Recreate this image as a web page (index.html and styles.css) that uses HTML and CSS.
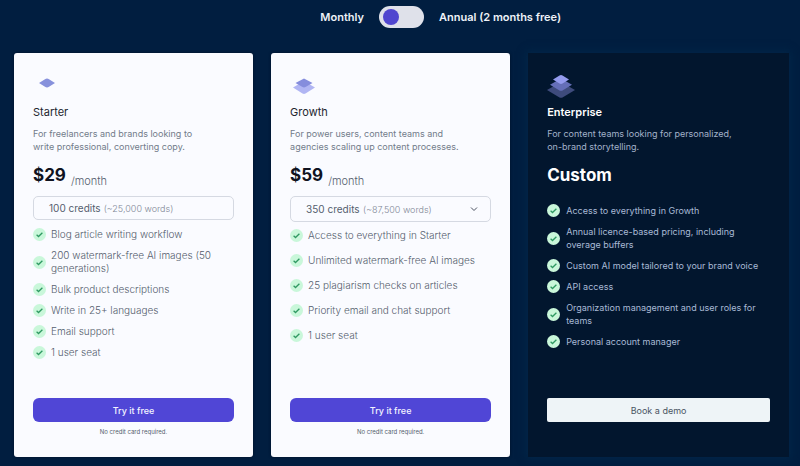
FILE: index.html
```html
<!DOCTYPE html>
<html lang="en">
<head>
<meta charset="UTF-8">
<meta name="viewport" content="width=device-width, initial-scale=1">
<title>Pricing</title>
<link rel="stylesheet" href="styles.css">
</head>
<body>
	<!-- shared tick icon -->
	<svg class="defs" width="0" height="0" aria-hidden="true">
		<symbol id="tick" viewBox="0 0 13 13">
			<circle class="tick-bg" cx="6.5" cy="6.5" r="6.5"/>
			<path class="tick-mark" d="M3.6 6.8 L5.5 8.5 L9.4 4.7"/>
		</symbol>
	</svg>

	<header class="billing">
		<label class="billing-left" for="period">Monthly</label>
		<input class="switch" type="checkbox" id="period">
		<label for="period">Annual (2 months free)</label>
	</header>

	<main class="plans">
		<section class="card">
			<svg class="logo" viewBox="0 0 28 28" aria-hidden="true">
				<path fill="#8791dc" d="M14 5.5 Q15 5.5 16 6.2 L22 10 L16 13.8 Q14 15 12 13.8 L6 10 L12 6.2 Q13 5.5 14 5.5z"/>
			</svg>
			<h2>Starter</h2>
			<p class="desc">For freelancers and brands looking to write professional, converting copy.</p>
			<p class="price"><strong>$29</strong> <span>/month</span></p>
			<div class="credits">100 credits <small>(~25,000 words)</small></div>
			<ul>
				<li><svg><use href="#tick"/></svg>Blog article writing workflow</li>
				<li><svg><use href="#tick"/></svg>200 watermark-free AI images (50 generations)</li>
				<li><svg><use href="#tick"/></svg>Bulk product descriptions</li>
				<li><svg><use href="#tick"/></svg>Write in 25+ languages</li>
				<li><svg><use href="#tick"/></svg>Email support</li>
				<li><svg><use href="#tick"/></svg>1 user seat</li>
			</ul>
			<footer>
				<button type="button">Try it free</button>
				<p class="note">No credit card required.</p>
			</footer>
		</section>

		<section class="card growth">
			<svg class="logo" viewBox="0 0 28 28" aria-hidden="true">
				<path fill="#b0b5f3" d="M14 8 L25 14.5 L15.5 20.6 Q14 21.5 12.5 20.6 L3 14.5z"/>
				<path fill="#858ddd" d="M14 5.5 L22.5 10 L15.5 14 Q14 14.8 12.5 14 L5.5 10z"/>
			</svg>
			<h2>Growth</h2>
			<p class="desc">For power users, content teams and agencies scaling up content processes.</p>
			<p class="price"><strong>$59</strong> <span>/month</span></p>
			<div class="credits">
				<select id="credits" aria-label="Credits">
					<option>350 credits</option>
				</select>
				<label for="credits"><small>(~87,500 words)</small></label>
				<svg class="arrow" viewBox="0 0 8 6" aria-hidden="true"><path d="M1 1.5 L4 4.5 L7 1.5"/></svg>
			</div>
			<ul>
				<li><svg><use href="#tick"/></svg>Access to everything in Starter</li>
				<li><svg><use href="#tick"/></svg>Unlimited watermark-free AI images</li>
				<li><svg><use href="#tick"/></svg>25 plagiarism checks on articles</li>
				<li><svg><use href="#tick"/></svg>Priority email and chat support</li>
				<li><svg><use href="#tick"/></svg>1 user seat</li>
			</ul>
			<footer>
				<button type="button">Try it free</button>
				<p class="note">No credit card required.</p>
			</footer>
		</section>

		<section class="card enterprise">
			<svg class="logo" viewBox="0 0 28 28" aria-hidden="true">
				<path fill="#3e4b7c" d="M14 9 L28 17 L15.5 24.4 Q14 25.2 12.5 24.4 L0 17z"/>
				<path fill="#656fb8" d="M14 5.5 L25 11.8 L15.5 17.4 Q14 18.2 12.5 17.4 L3 11.8z"/>
				<path fill="#949bee" d="M12.5 2.4 Q14 1.6 15.5 2.4 L22 6.5 L15.5 10.6 Q14 11.4 12.5 10.6 L6 6.5z"/>
			</svg>
			<h2>Enterprise</h2>
			<p class="desc">For content teams looking for personalized, on-brand storytelling.</p>
			<p class="price"><strong>Custom</strong></p>
			<ul>
				<li><svg><use href="#tick"/></svg>Access to everything in Growth</li>
				<li><svg><use href="#tick"/></svg>Annual licence-based pricing, including overage buffers</li>
				<li><svg><use href="#tick"/></svg>Custom AI model tailored to your brand voice</li>
				<li><svg><use href="#tick"/></svg>API access</li>
				<li><svg><use href="#tick"/></svg>Organization management and user roles for teams</li>
				<li><svg><use href="#tick"/></svg>Personal account manager</li>
			</ul>
			<footer>
				<button type="button">Book a demo</button>
			</footer>
		</section>
	</main>
</body>
</html>
```
FILE: styles.css
```css
* {
	box-sizing: border-box;
}
body {
	margin: 0;
	min-height: 100vh;
	padding: 6px 11px 9px 14px;
	display: flex;
	flex-direction: column;
	background: #011e40;
	font-family: Inter, "Liberation Sans", sans-serif;
	font-size: 10px;
	line-height: 13px;
	color: #555e6e;
}
h2, p, ul {
	margin: 0;
	padding: 0;
}
.defs {
	position: absolute;
}

/* monthly / annual switch */
.billing {
	display: grid;
	grid-template-columns: 1fr auto 1fr;
	align-items: center;
	column-gap: 15px;
	margin-bottom: 25px;
	color: #eef2f8;
	font-size: 11px;
	font-weight: 600;
}
.billing-left {
	text-align: right;
}
.switch {
	appearance: none;
	margin: 0;
	width: 45px;
	height: 22px;
	padding: 3px 4px;
	border-radius: 11px;
	background: #dfe1ea;
}
.switch::before {
	content: "";
	display: block;
	width: 16px;
	height: 16px;
	border-radius: 50%;
	background: #5046cf;
}
.switch:checked::before {
	margin-left: auto;
}

/* cards */
.plans {
	flex: 1;
	display: grid;
	grid-template-columns: 11fr 11fr 12fr;
	gap: 18px;
}
.card {
	display: flex;
	flex-direction: column;
	padding: 20px 19px 19px;
	border-radius: 3px;
	background: #fafbff;
	box-shadow: 0 0 3px #000f26;
}
.logo {
	width: 28px;
	height: 28px;
}
h2 {
	margin-top: 4px;
	font-size: 11px;
	line-height: 14px;
	font-weight: 400;
	color: #23262f;
}
.desc {
	max-width: 175px;
	margin-top: 8px;
	font-size: 9px;
	color: #727b8a;
}
.price {
	display: flex;
	gap: 5px;
	margin-top: 10px;
	height: 24px;
	font-size: 11px;
	font-weight: 300;
	line-height: 24px;
}
.price strong {
	font-size: 17px;
	font-weight: 700;
	color: #10131f;
}
.price span {
	padding-top: 6px;
}
.credits {
	display: flex;
	align-items: center;
	gap: 3px;
	height: 24px;
	margin-top: 9px;
	padding: 0 12px 0 15px;
	border: 1px solid #d5d9e2;
	border-radius: 5px;
	font-size: 10px;
}
.growth .credits {
	height: 26px;
}
.credits small {
	font-size: 9px;
	font-weight: 300;
	color: #7f8796;
}
.credits select {
	appearance: none;
	border: 0;
	padding: 0;
	background: none;
	font: inherit;
	color: inherit;
}
.arrow {
	width: 8px;
	height: 6px;
	margin-left: auto;
	fill: none;
	stroke: #4b5160;
}

ul {
	display: flex;
	flex-direction: column;
	gap: 8px;
	margin-top: 8px;
	font-weight: 300;
	list-style: none;
}
li {
	display: flex;
	align-items: center;
	gap: 5px;
}
li svg {
	flex: none;
	width: 13px;
	height: 13px;
}
.tick-bg {
	fill: #c9f7da;
}
.tick-mark {
	fill: none;
	stroke: #2f9a62;
	stroke-width: 1.3;
}
.growth ul {
	margin-top: 7px;
	gap: 12px;
}

footer {
	margin-top: auto;
	min-height: 40px;
	text-align: center;
}
button {
	display: block;
	width: 100%;
	height: 24px;
	border: 0;
	border-radius: 6px;
	background: #5046d6;
	color: #f3f3ff;
	font: 500 9px Inter, "Liberation Sans", sans-serif;
}
.note {
	margin-top: 3px;
	font-size: 6px;
}

/* dark card */
.enterprise {
	background: #02162e;
	box-shadow: 0 0 8px 2px #022648;
	border-radius: 0;
	color: #a9bad6;
}
.enterprise h2,
.enterprise .price strong {
	color: #fff;
}
.enterprise h2 {
	font-weight: 600;
}
.enterprise .desc {
	max-width: 190px;
	color: #a3b2ca;
}
.enterprise ul {
	margin-top: 17px;
	font-size: 9px;
	font-weight: 400;
}
.enterprise li {
	gap: 6px;
}
.enterprise button {
	border-radius: 2px;
	background: #eef4f7;
	color: #4a5563;
	font-weight: 400;
}
```
